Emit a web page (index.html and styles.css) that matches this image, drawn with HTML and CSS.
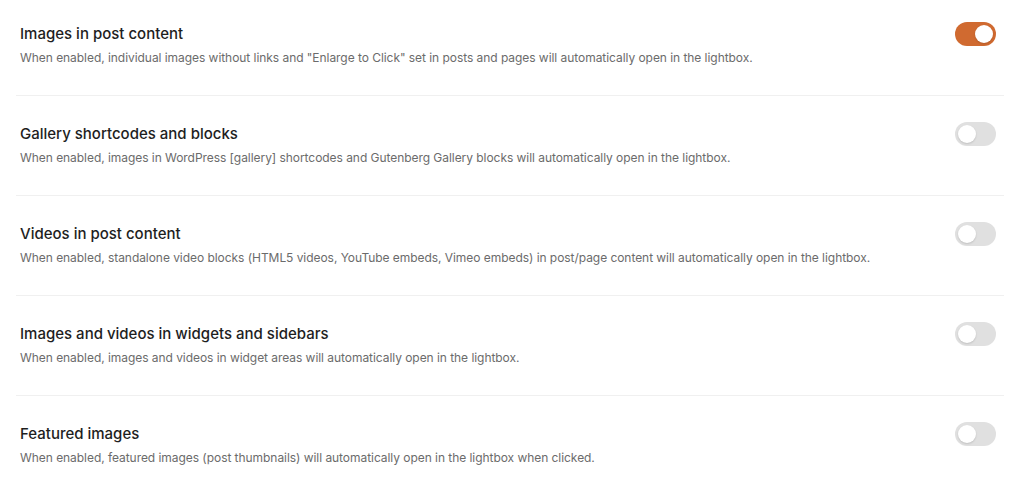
FILE: index.html
```html
<!DOCTYPE html>
<html lang="en">
<head>
    <meta charset="UTF-8">
    <title>Lightbox settings</title>
    <link rel="stylesheet" href="styles.css">
</head>
<body>

<div class="settings">
    <div class="setting">
        <div class="setting-text">
            <h3>Images in post content</h3>
            <p>When enabled, individual images without links and "Enlarge to Click" set in posts and pages will automatically open in the lightbox.</p>
        </div>
        <label class="toggle">
            <input type="checkbox" checked>
            <span class="track"></span>
        </label>
    </div>

    <div class="setting">
        <div class="setting-text">
            <h3>Gallery shortcodes and blocks</h3>
            <p>When enabled, images in WordPress [gallery] shortcodes and Gutenberg Gallery blocks will automatically open in the lightbox.</p>
        </div>
        <label class="toggle">
            <input type="checkbox">
            <span class="track"></span>
        </label>
    </div>

    <div class="setting">
        <div class="setting-text">
            <h3>Videos in post content</h3>
            <p>When enabled, standalone video blocks (HTML5 videos, YouTube embeds, Vimeo embeds) in post/page content will automatically open in the lightbox.</p>
        </div>
        <label class="toggle">
            <input type="checkbox">
            <span class="track"></span>
        </label>
    </div>

    <div class="setting">
        <div class="setting-text">
            <h3>Images and videos in widgets and sidebars</h3>
            <p>When enabled, images and videos in widget areas will automatically open in the lightbox.</p>
        </div>
        <label class="toggle">
            <input type="checkbox">
            <span class="track"></span>
        </label>
    </div>

    <div class="setting">
        <div class="setting-text">
            <h3>Featured images</h3>
            <p>When enabled, featured images (post thumbnails) will automatically open in the lightbox when clicked.</p>
        </div>
        <label class="toggle">
            <input type="checkbox">
            <span class="track"></span>
        </label>
    </div>
</div>

</body>
</html>
```

FILE: styles.css
```css
body {
    font-family: 'Inter', 'Liberation Sans', sans-serif;
    background-color: #fff;
    margin: 0;
}
.settings {
    padding: 0 20px 0 16px;
}
.setting {
    display: flex;
    justify-content: space-between;
    align-items: flex-start;
    padding: 26px 4px 28px;
    border-bottom: 1px solid #f0f0f0;
}
.setting:first-child {
    padding-top: 22px;
}
.setting h3 {
    margin: 0 0 3px;
    font-size: 15px;
    font-weight: 500;
    line-height: 24px;
    color: #1e1e1e;
}
.setting p {
    margin: 0;
    font-size: 12px;
    letter-spacing: -0.05px;
    line-height: 18px;
    color: #6b6b6b;
}
.toggle {
    flex-shrink: 0;
    margin-right: 4px;
}
.toggle input {
    display: none;
}
.track {
    display: block;
    width: 41px;
    height: 24px;
    border-radius: 12px;
    background-color: #e0e0e0;
    position: relative;
}
.track::after {
    content: "";
    position: absolute;
    top: 3px;
    left: 3px;
    width: 18px;
    height: 18px;
    border-radius: 50%;
    background-color: #fff;
    box-shadow: 0 1px 2px rgba(0, 0, 0, 0.15);
}
.toggle input:checked + .track {
    background-color: #d06a30;
}
.toggle input:checked + .track::after {
    left: 20px;
}
```
